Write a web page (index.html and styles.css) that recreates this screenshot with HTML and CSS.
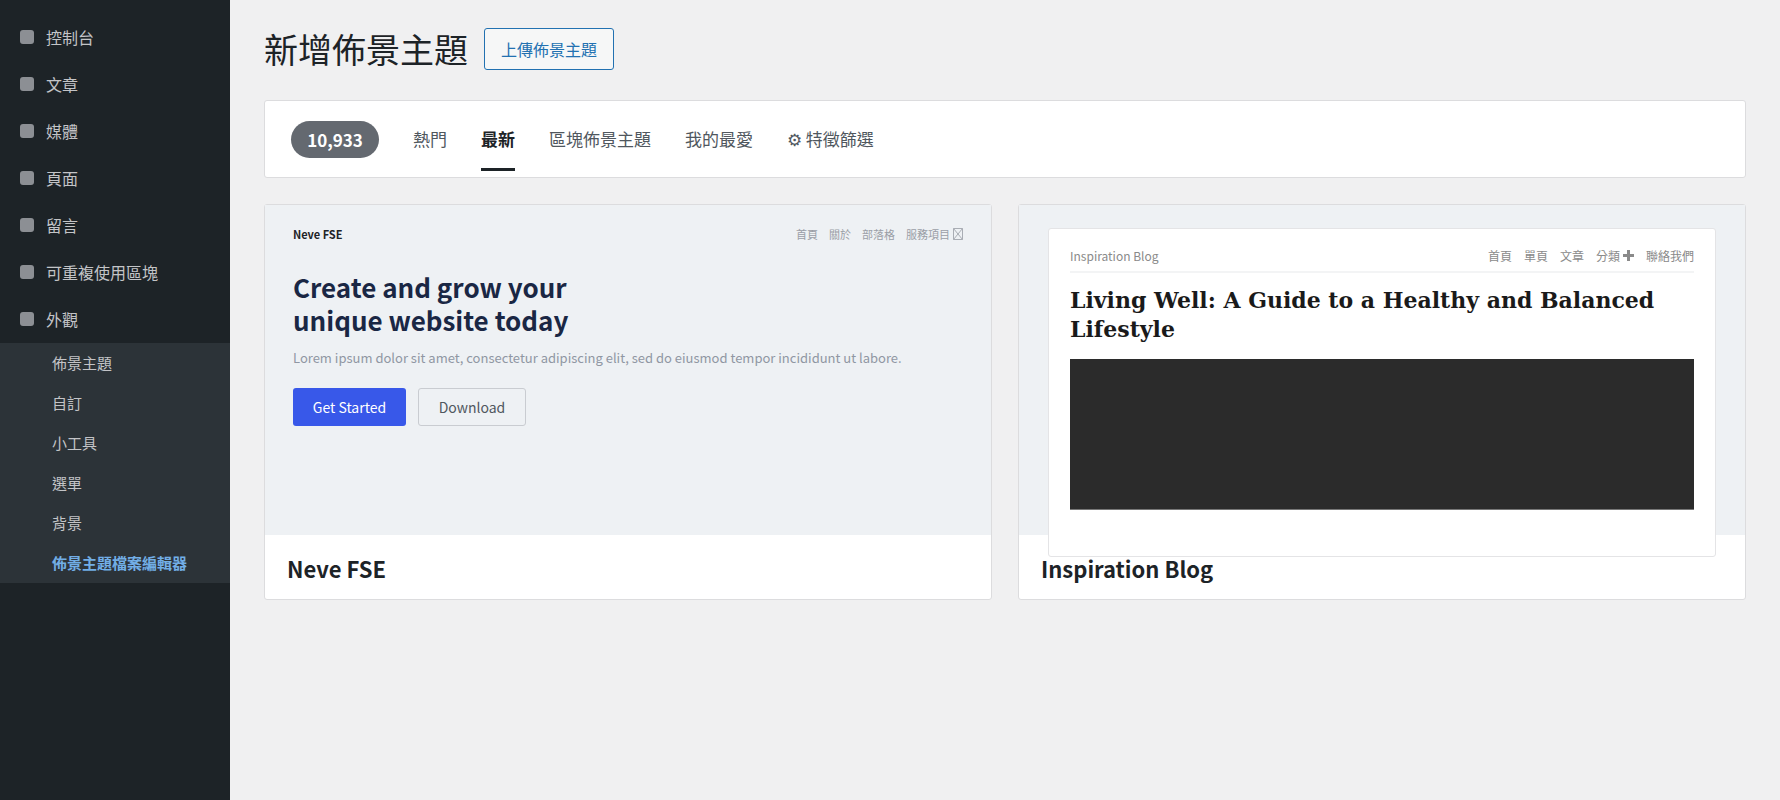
FILE: index.html
```html
<!DOCTYPE html>
<html lang="zh-Hant">
<head>
    <meta charset="UTF-8">
    <meta name="viewport" content="width=device-width, initial-scale=1.0">
    <title>新增佈景主題</title>
    <link rel="stylesheet" href="styles.css">
</head>
<body>
    <aside class="sidebar">
        <ul class="menu">
            <li class="menu-item"><span class="menu-icon"></span>控制台</li>
            <li class="menu-item"><span class="menu-icon"></span>文章</li>
            <li class="menu-item"><span class="menu-icon"></span>媒體</li>
            <li class="menu-item"><span class="menu-icon"></span>頁面</li>
            <li class="menu-item"><span class="menu-icon"></span>留言</li>
            <li class="menu-item"><span class="menu-icon"></span>可重複使用區塊</li>
            <li class="menu-item"><span class="menu-icon"></span>外觀</li>
        </ul>
        <ul class="submenu">
            <li class="submenu-item">佈景主題</li>
            <li class="submenu-item">自訂</li>
            <li class="submenu-item">小工具</li>
            <li class="submenu-item">選單</li>
            <li class="submenu-item">背景</li>
            <li class="submenu-item active">佈景主題檔案編輯器</li>
        </ul>
    </aside>

    <main class="content">
        <header class="page-header">
            <h1>新增佈景主題</h1>
            <a href="#" class="upload-btn">上傳佈景主題</a>
        </header>

        <nav class="filter-bar">
            <span class="count">10,933</span>
            <a href="#" class="tab">熱門</a>
            <a href="#" class="tab current">最新</a>
            <a href="#" class="tab">區塊佈景主題</a>
            <a href="#" class="tab">我的最愛</a>
            <a href="#" class="tab">⚙ 特徵篩選</a>
        </nav>

        <section class="themes">
            <article class="theme">
                <div class="preview neve">
                    <div class="neve-top">
                        <strong>Neve FSE</strong>
                        <div class="neve-nav">
                            <span>首頁</span>
                            <span>關於</span>
                            <span>部落格</span>
                            <span class="with-icon">服務項目
                                <svg class="tofu" viewBox="0 0 10 12" width="10" height="12"><path d="M.5.5h9v11h-9zM.5.5l9 11M9.5.5l-9 11" fill="none" stroke="#a9adb4" stroke-width="1"/></svg>
                            </span>
                        </div>
                    </div>
                    <h2>Create and grow your<br>unique website today</h2>
                    <p>Lorem ipsum dolor sit amet, consectetur adipiscing elit, sed do eiusmod tempor incididunt ut labore.</p>
                    <div class="neve-actions">
                        <a href="#" class="btn-primary">Get Started</a>
                        <a href="#" class="btn-outline">Download</a>
                    </div>
                </div>
                <h3 class="theme-name">Neve FSE</h3>
            </article>

            <article class="theme">
                <div class="preview inspiration">
                    <div class="blog">
                        <div class="blog-top">
                            <span>Inspiration Blog</span>
                            <div class="blog-nav">
                                <span>首頁</span>
                                <span>單頁</span>
                                <span>文章</span>
                                <span class="with-icon">分類
                                    <svg viewBox="0 0 11 11" width="11" height="11"><path d="M4 0h3v4h4v3H7v4H4V7H0V4h4z" fill="#8a8a8a"/></svg>
                                </span>
                                <span>聯絡我們</span>
                            </div>
                        </div>
                        <h2>Living Well: A Guide to a Healthy and Balanced Lifestyle</h2>
                        <div class="blog-image"></div>
                    </div>
                </div>
                <h3 class="theme-name">Inspiration Blog</h3>
            </article>
        </section>
    </main>
</body>
</html>
```

FILE: styles.css
```css
* {
    box-sizing: border-box;
}

body {
    font-family: "Noto Sans CJK TC", "Noto Sans", sans-serif;
    background: #f0f0f1;
    margin: 0;
    padding: 0;
    display: flex;
    height: 100vh;
    overflow: hidden;
    color: #1d2327;
}

a {
    text-decoration: none;
}

ul {
    list-style: none;
    margin: 0;
    padding: 0;
}

/* sidebar */
.sidebar {
    width: 230px;
    flex-shrink: 0;
    background: #1d2327;
}

.menu {
    padding-top: 14px;
}

.menu-item {
    height: 47px;
    display: flex;
    align-items: center;
    padding-left: 20px;
    padding-bottom: 2px;
    font-size: 16px;
    color: #c3c4c7;
}

.menu-icon {
    width: 14px;
    height: 14px;
    margin-right: 12px;
    border-radius: 3px;
    background: #8c8f94;
}

.submenu {
    background: #2c3338;
}

.submenu-item {
    height: 40px;
    display: flex;
    align-items: center;
    padding-left: 52px;
    padding-bottom: 2px;
    font-size: 15px;
    color: #c3c4c7;
}

.submenu-item.active {
    color: #72aee6;
    font-weight: 700;
}

/* main column */
.content {
    flex: 1;
    padding: 28px 34px 0 34px;
}

.page-header {
    display: flex;
    align-items: center;
    gap: 16px;
    height: 42px;
    margin-bottom: 30px;
}

h1 {
    margin: 0;
    font-size: 34px;
    font-weight: 400;
    line-height: 42px;
}

.upload-btn {
    display: flex;
    align-items: center;
    justify-content: center;
    width: 130px;
    height: 42px;
    border: 1px solid #2271b1;
    border-radius: 3px;
    background: #f6f7f7;
    color: #2271b1;
    font-size: 16px;
}

.filter-bar {
    display: flex;
    align-items: stretch;
    gap: 34px;
    height: 78px;
    padding-left: 26px;
    background: #fff;
    border: 1px solid #dcdcde;
    border-radius: 3px;
}

.count {
    align-self: center;
    width: 88px;
    height: 37px;
    border-radius: 19px;
    background: #646970;
    color: #fff;
    font-size: 17px;
    font-weight: 600;
    line-height: 37px;
    text-align: center;
}

.tab {
    display: flex;
    align-items: center;
    padding-top: 7px;
    border-bottom: 3px solid transparent;
    margin-bottom: 6px;
    color: #50575e;
    font-size: 17px;
}

.tab.current {
    color: #1d2327;
    font-weight: 700;
    border-bottom-color: #1d2327;
}

/* theme cards */
.themes {
    display: grid;
    grid-template-columns: 1fr 1fr;
    gap: 26px;
    margin-top: 26px;
}

.theme {
    height: 396px;
    background: #fff;
    border: 1px solid #dcdcde;
    border-radius: 3px;
}

.preview {
    height: 330px;
    background: #eef1f4;
}

.theme-name {
    margin: 0;
    padding: 15px 22px 0;
    font-size: 22px;
    font-weight: 600;
    line-height: 36px;
}

/* neve preview */
.neve {
    padding: 17px 28px;
}

.neve-top {
    display: flex;
    justify-content: space-between;
    align-items: center;
    height: 24px;
    font-size: 11px;
}

.neve-nav {
    display: flex;
    gap: 11px;
    color: #9a9ea6;
}

.with-icon {
    display: inline-flex;
    align-items: center;
    gap: 3px;
}

.neve h2 {
    margin: 24px 0 0;
    font-size: 26px;
    font-weight: 600;
    line-height: 33px;
    color: #1a2744;
}

.neve p {
    margin: 10px 0 0;
    font-size: 13px;
    line-height: 24px;
    color: #9097a3;
}

.neve-actions {
    display: flex;
    gap: 12px;
    margin-top: 18px;
}

.btn-primary,
.btn-outline {
    display: flex;
    align-items: center;
    justify-content: center;
    height: 38px;
    border-radius: 3px;
    font-size: 14px;
}

.btn-primary {
    width: 113px;
    background: #3858e9;
    color: #fff;
}

.btn-outline {
    width: 108px;
    border: 1px solid #c9ccd1;
    color: #50575e;
}

/* inspiration preview */
.inspiration {
    padding: 23px 29px 0 29px;
}

.blog {
    height: 329px;
    padding: 12px 21px 0;
    background: #fff;
    border: 1px solid #e4e4e6;
    border-radius: 3px;
}

.blog-top {
    display: flex;
    justify-content: space-between;
    align-items: center;
    height: 32px;
    border-bottom: 2px solid #f3f4f5;
    padding-bottom: 2px;
    font-size: 12px;
    color: #8a8a8a;
}

.blog-nav {
    display: flex;
    gap: 12px;
}

.blog h2 {
    margin: 13px 0 0;
    font-family: "DejaVu Serif", serif;
    font-size: 22px;
    font-weight: 700;
    line-height: 28.5px;
    color: #1a1a1a;
}

.blog-image {
    height: 151px;
    margin-top: 16px;
    background: #2b2b2b;
    border-bottom: 1px solid #777;
}
```
